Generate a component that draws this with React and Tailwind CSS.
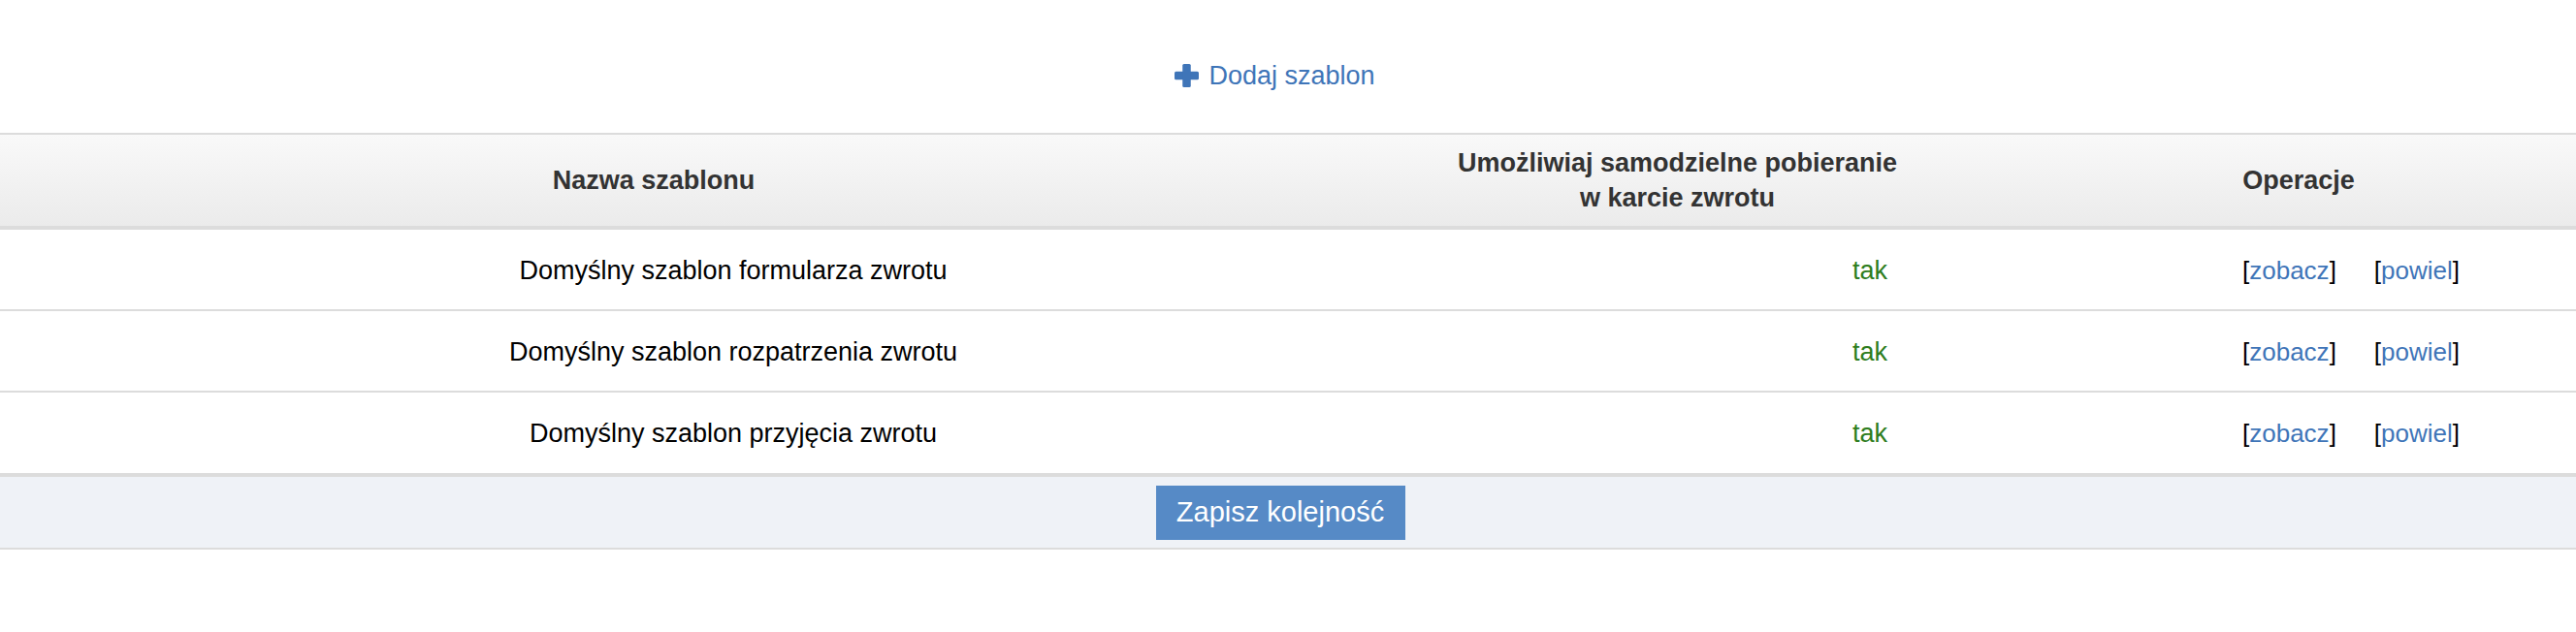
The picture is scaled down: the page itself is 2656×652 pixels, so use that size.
import React from 'react';

const templates = [
    { id: 1, name: 'Domyślny szablon formularza zwrotu', selfService: 'tak' },
    { id: 2, name: 'Domyślny szablon rozpatrzenia zwrotu', selfService: 'tak' },
    { id: 3, name: 'Domyślny szablon przyjęcia zwrotu', selfService: 'tak' },
];

function PlusIcon() {
    return (
        <svg width="25" height="24" viewBox="0 0 25 24" className="shrink-0">
            <rect x="0" y="7.75" width="25" height="8.5" rx="1.5" fill="#3f75b8" />
            <rect x="8.25" y="0" width="8.5" height="24" rx="1.5" fill="#3f75b8" />
        </svg>
    );
}

export default function App() {
    return (
        <div className="w-full min-h-[652px] bg-white text-black font-['Liberation_Sans',Arial,sans-serif]">
            {/* Add template */}
            <div className="h-[137px] flex justify-center pt-[62px] pr-[27px]">
                <a href="#" className="flex items-center gap-[10px] h-[32px] text-[27px] text-[#3f75b8]">
                    <PlusIcon />
                    Dodaj szablon
                </a>
            </div>

            {/* Table header */}
            <div className="flex h-[100px] border-t-2 border-b-4 border-[#dcdcdc] bg-gradient-to-b from-[#f9f9f9] to-[#ebebeb] text-[27px] font-bold text-[#333] leading-[36px]">
                <div className="w-[1348px] flex items-center justify-center">Nazwa szablonu</div>
                <div className="w-[763px] flex items-center justify-center text-center">
                    Umożliwiaj samodzielne pobieranie
                    <br />
                    w karcie zwrotu
                </div>
                <div className="w-[518px] flex items-center justify-center">Operacje</div>
            </div>

            {/* Rows */}
            {templates.map((t, i) => (
                <div
                    key={t.id}
                    className={`flex items-center text-[27px] pt-[2px] ${i === templates.length - 1 ? 'h-[87px] border-b-4' : 'h-[84px] border-b-2'} border-[#dcdcdc]`}
                >
                    <div className="w-[1512px] text-center">{t.name}</div>
                    <div className="w-[800px] flex justify-end pr-[366px] text-[#2e7d20]">{t.selfService}</div>
                    <div className="flex items-center gap-[39px] text-[26px]">
                        <span>[<a href="#" className="text-[#3f75b8]">zobacz</a>]</span>
                        <span>[<a href="#" className="text-[#3f75b8]">powiel</a>]</span>
                    </div>
                </div>
            ))}

            {/* Footer */}
            <div className="h-[75px] flex items-center justify-center pr-[16px] bg-[#eff2f7] border-b-2 border-[#dcdcdc]">
                <button className="w-[257px] h-[56px] bg-[#568ac6] text-white text-[29px]">
                    Zapisz kolejność
                </button>
            </div>
        </div>
    );
}
